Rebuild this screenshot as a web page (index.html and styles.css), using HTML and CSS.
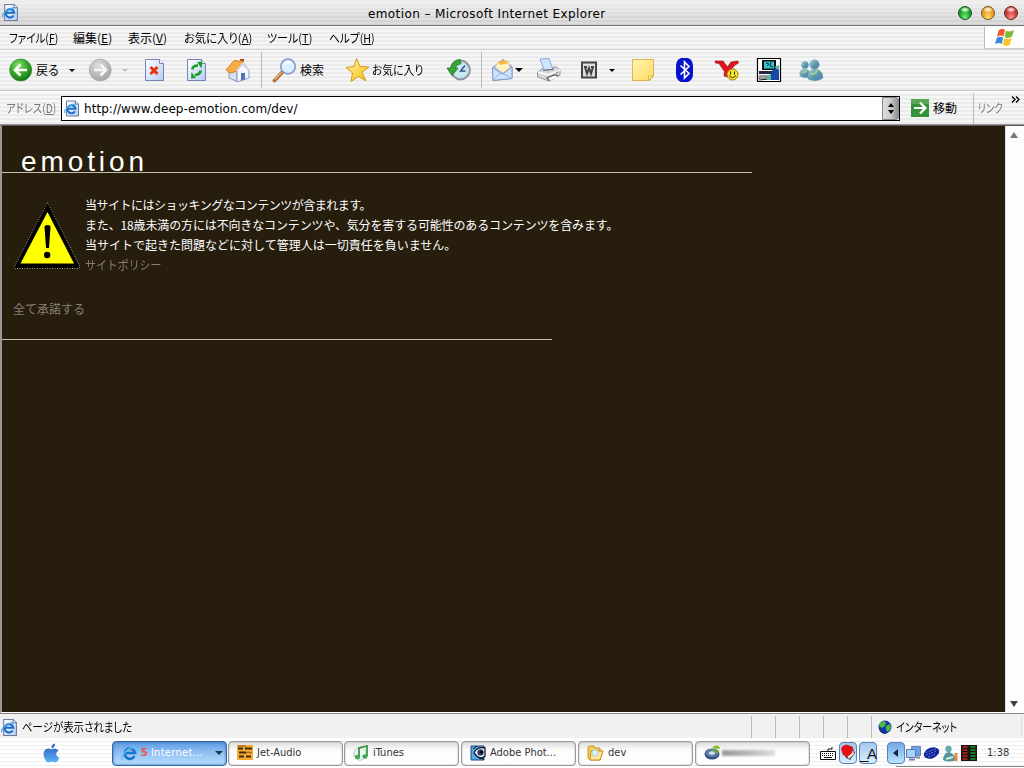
FILE: index.html
```html
<!DOCTYPE html>
<html lang="ja">
<head>
<meta charset="utf-8">
<title>emotion – Microsoft Internet Explorer</title>
<link rel="stylesheet" href="styles.css">
</head>
<body>
<svg class="defs" width="0" height="0">
<defs>
<linearGradient id="paper" x1="0" y1="0" x2="1" y2="1"><stop offset="0" stop-color="#fff"/><stop offset="1" stop-color="#b4cdf5"/></linearGradient>
<radialGradient id="green" cx=".4" cy=".3" r=".7"><stop offset="0" stop-color="#8fe07a"/><stop offset=".5" stop-color="#3cae2c"/><stop offset="1" stop-color="#157a12"/></radialGradient>
<radialGradient id="gray" cx=".4" cy=".3" r=".7"><stop offset="0" stop-color="#ddd"/><stop offset="1" stop-color="#a5a5a5"/></radialGradient>
<linearGradient id="gold" x1="0" y1="0" x2="1" y2="1"><stop offset="0" stop-color="#fff9b0"/><stop offset="1" stop-color="#f8b800"/></linearGradient>
<linearGradient id="note" x1="0" y1="0" x2="1" y2="1"><stop offset="0" stop-color="#fff6b8"/><stop offset="1" stop-color="#ffd95c"/></linearGradient>
<linearGradient id="msn" x1="0" y1="0" x2="1" y2="1"><stop offset="0" stop-color="#b4d8e8"/><stop offset=".5" stop-color="#5b9aa5"/><stop offset="1" stop-color="#4a78b8"/></linearGradient>
<linearGradient id="apple" x1="0" y1="0" x2="0" y2="1"><stop offset="0" stop-color="#2458b8"/><stop offset=".5" stop-color="#4384d8"/><stop offset="1" stop-color="#58b4f4"/></linearGradient>
<symbol id="ie-page" viewBox="0 0 16 16"><path d="M2.500.5h9l3 3v12h-12z" fill="url(#paper)" stroke="#6a7a9c"/><path d="M11.500.5v3h3" fill="#fff" stroke="#6a7a9c"/><path d="M11 10.800A4 4 0 1 1 11.500 8.200H4" fill="none" stroke="#1a6fc8" stroke-width="2"/><path d="M1 12.500C-1 9 8 2.500 12.500 4" fill="none" stroke="#4aa6e8" stroke-width="1.200"/></symbol>
<symbol id="ie" viewBox="0 0 17 16"><path d="M13.500 11A5.200 5.200 0 1 1 14 8H4.500" fill="none" stroke="#1678cc" stroke-width="2.700"/><path d="M1.500 14.500C-1.500 10 10 .5 15.500 2.500c1 .7.5 2.500 0 3.500" fill="none" stroke="#67bdf4" stroke-width="1.500"/></symbol>
</defs>
</svg>

<header class="titlebar">
  <svg class="title-icon" width="17" height="17"><use href="#ie-page"/></svg>
  <h1 class="title">emotion – Microsoft Internet Explorer</h1>
  <div class="lights"><i class="light go"></i><i class="light wait"></i><i class="light stop"></i></div>
</header>

<nav class="menubar">
  <span class="m1">ファイル(<u>F</u>)</span><span class="m2">編集(<u>E</u>)</span><span class="m3">表示(<u>V</u>)</span><span class="m4">お気に入り(<u>A</u>)</span><span class="m5">ツール(<u>T</u>)</span><span class="m6">ヘルプ(<u>H</u>)</span>
  <div class="flag"><svg width="22" height="20" viewBox="0 0 22 20"><path d="M4.500 2.500Q8-.5 11 2L9.500 8.500Q6.500 6.500 3 9z" fill="#ee5a2c"/><path d="M12 2.500Q15 4.500 20 2L18 8.500Q14 11 10.500 9z" fill="#7dbb32"/><path d="M2.700 10Q6 7.800 9.200 9.700L7.700 16Q5 14 1 16z" fill="#3c87dc"/><path d="M10.200 10.200Q14 12 17.700 9.800L16 16.500Q12 19.500 8.700 16.600z" fill="#fbc52b"/></svg></div>
</nav>

<div class="toolbar">
  <svg viewBox="0 0 26 26"><circle cx="12.700" cy="13" r="11" fill="url(#green)" stroke="#38803a" stroke-width=".7"/><path d="M12.500 7.500L7 13l5.500 5.500M7.500 13H19" fill="none" stroke="#fff" stroke-width="2.600"/></svg>
  <span class="t-back">戻る</span>
  <i class="caret"></i>
  <svg viewBox="0 0 26 26"><circle cx="12.200" cy="13" r="11" fill="url(#gray)" stroke="#aaa" stroke-width=".7"/><path d="M12.500 7.500L18 13l-5.500 5.500M17.500 13H6" fill="none" stroke="#f6f6f6" stroke-width="2.600"/></svg>
  <i class="caret off"></i>
  <svg viewBox="0 0 26 26"><path d="M3.500 2.500h14l4 4v17h-18z" fill="url(#paper)" stroke="#7583b8"/><path d="M17.500 2.500v4h4" fill="#fff" stroke="#7583b8"/><path d="M8.500 10l7 7M15.500 10l-7 7" stroke="#e8320e" stroke-width="3"/></svg>
  <svg viewBox="0 0 26 26"><path d="M3.500 2.500h14l4 4v17h-18z" fill="url(#paper)" stroke="#7583b8"/><path d="M17.500 2.500v4h4" fill="#fff" stroke="#7583b8"/><path d="M8.300 12.500q.5-4 5.700-4M16.700 13.500q-.5 4-5.700 4.500" fill="none" stroke="#1a9c28" stroke-width="2.600"/><path d="M13 5l5.500-.5-1 7zM12 21l-5 .5.500-6.500z" fill="#1a9c28"/></svg>
  <svg viewBox="0 0 26 26"><path d="M5 12v9l8 3.500V12z" fill="#d5e0f4" stroke="#8a9cc4"/><path d="M13 13l6-6 6 7v7l-12 4z" fill="#f4f7ff" stroke="#8a9cc4"/><path d="M17 16h4v6.500l-4 1.300z" fill="#5674b8"/><path d="M16 3.500V2h4v5z" fill="#b24424"/><path d="M2 13L10 3.500 20 4.500 12 14.500 6 16z" fill="#f8ac48" stroke="#d88224"/><path d="M12.500 14L19.500 6l6 8" fill="none" stroke="#d5d9e6" stroke-width="1.800"/></svg>
  <i class="sep"></i>
  <svg viewBox="0 0 26 26"><path d="M10.500 15l-8 8.500" stroke="#b56f36" stroke-width="3.800" stroke-linecap="round"/><path d="M9.500 15.500l-7 7" stroke="#f0b878" stroke-width="1.500"/><circle cx="16" cy="9.500" r="7.300" fill="#d8f0ff" stroke="#8e9cc8" stroke-width="1.700"/><path d="M11.500 9q1-4.500 5-4.500 3 0 3 2-4-1-8 2.500" fill="#fff"/></svg>
  <span class="t-search">検索</span>
  <svg viewBox="0 0 26 26"><path d="M12.500 1.500l3.500 8 9 .5-7 5.500 4 8.500-7.500-4.500L7 24.500 8.500 16 2 10.500l8-1z" fill="url(#gold)" stroke="#d89820" stroke-linejoin="round"/></svg>
  <span class="t-fav">お気に入り</span>
  <svg viewBox="0 0 26 26"><circle cx="14.500" cy="13" r="9" fill="#c8e8f4" stroke="#8d93a3" stroke-width="2.800"/><circle cx="14.500" cy="13" r="8" fill="none" stroke="#dce6ee"/><path d="M19 8.500l-4.500 5.500h5" fill="none" stroke="#345487" stroke-width="1.400"/><path d="M14 2.500Q6 3 4.500 11H1l5 7.500 6-7.500H9q1-3 6-4.500z" fill="#35a533" stroke="#17741c" stroke-width=".8"/></svg>
  <i class="sep"></i>
  <svg viewBox="0 0 26 26"><path d="M2.500 10.500L13 2.500l9 7v12l-19 2z" fill="#aaccf8" stroke="#8796cc"/><path d="M5 10l3.500-5 10-1 1.500 7-7 5z" fill="#fff3c4" stroke="#d8b888" stroke-width=".7"/><path d="M8 5l6-2 5 3-9 2z" fill="#f6b93e"/><path d="M2.500 10.500L12.500 17 22 10v11.500l-19 2z" fill="#cde4ff" stroke="#8796cc"/><path d="M3 23l8-7.500 11 6" fill="none" stroke="#8faede"/></svg>
  <i class="caret big"></i>
  <svg viewBox="0 0 26 26"><path d="M1.500 15l6-4 13-1 3.500 3v5l-11 6-11.500-4z" fill="#d6d6dc" stroke="#96969f"/><path d="M4 2l9-.5 4 11-8.500 1z" fill="#cfe6ff" stroke="#87a8db"/><path d="M2 15l10 3L24 13" fill="none" stroke="#fff" stroke-width="1.500"/><path d="M7 13.500l11-1.500" stroke="#666"/><path d="M10 20.500l9-3.500 4 2-10 5z" fill="#5b5b63"/><path d="M12 21l7-2.500 3 1.500-8 3.500z" fill="#fff"/><circle cx="21" cy="15.500" r="1" fill="#54b554"/></svg>
  <svg viewBox="0 0 26 26"><path d="M6 5.500h14v15H6z" fill="#ddd" stroke="#444" stroke-width="2"/><path d="M8 10h3M15 10h3M9 10l2 6.500 2-5.500 2 5.500 2-6.500" fill="none" stroke="#444" stroke-width="2"/></svg>
  <i class="caret"></i>
  <svg viewBox="0 0 26 26"><path d="M2.500 2.500h21v17l-4 4h-17z" fill="url(#note)" stroke="#deb64d"/><path d="M18.500 23.500v-4.500h5z" fill="#fff0a8" stroke="#dcb048"/></svg>
  <svg viewBox="0 0 26 26"><path d="M9 1h7q5 2 5 8v8q0 6-5 8H9q-5-2-5-8V9q0-6 5-8z" fill="#0712cf"/><path d="M8.500 8.500l8.500 8-4.500 4.500V5l4.500 4.500-8.500 8" fill="none" stroke="#fff" stroke-width="1.600"/></svg>
  <svg viewBox="0 0 26 26"><path d="M1 4h8l4.500 6L17 5l7-1 .5 2-3.500 2-6 7-1 5-4-1 .5-4.500L5 6.500 1.500 6z" fill="#e7141f" stroke="#780a0f" stroke-width=".6"/><circle cx="18.500" cy="17.500" r="5.500" fill="#ffe722" stroke="#977413"/><path d="M16.500 14.500v3M20.500 14.500v3M15 18.500q3.500 4 7 0" fill="none" stroke="#222"/></svg>
  <svg viewBox="0 0 26 26"><path d="M1.500 1.500h23v23h-23z" fill="#fff" stroke="#000" stroke-width="1.200"/><path d="M6 3h14v10H6z" fill="#111"/><path d="M8 4.500h10v7H8z" fill="#30c8cf"/><path d="M10 6l3 1-2 2M15 5l-1 4 3 1" fill="none" stroke="#124"/><path d="M3 14h14v3H3z" fill="#252540"/><path d="M3 18h14l-3 4H2z" fill="#999"/><path d="M3 23l10-1" stroke="#111"/><path d="M18 12q-5 3-3 11h8V11z" fill="#1749a0"/><path d="M11 19l4-2v6h-4zM18 10l5-2v5z" fill="#57b6a4"/></svg>
  <svg viewBox="0 0 26 26"><g fill="url(#msn)" stroke="#5e9aac" stroke-width=".5"><circle cx="7" cy="8" r="3.500"/><path d="M2 19q-1-7 5-7 5 0 5 8-6 2-10-1z"/><circle cx="16.500" cy="7.500" r="4.700"/><path d="M10 22q-1-10 7-10 8 1 8 9-7 5-15 1z"/></g><path d="M5 15q4 1 3-3M13 17q6 0 6-4" stroke="#9ccb90" stroke-width="2" fill="none"/></svg>
</div>

<div class="addressbar">
  <span class="t-address">アドレス(<u>D</u>)</span>
  <div class="field"><svg width="16" height="17"><use href="#ie-page"/></svg><span class="url">http://www.deep-emotion.com/dev/</span><div class="spin"><i class="up"></i><i class="down"></i></div></div>
  <svg class="go-icon" width="18" height="18" viewBox="0 0 18 18"><path d="M0 0h18v18H0z" fill="#35923a"/><path d="M0 0h18v5H0z" fill="#57a851"/><path d="M9 3.500L14.500 9 9 14.500M14 9H3" fill="none" stroke="#fff" stroke-width="2.200"/></svg>
  <span class="t-go">移動</span>
  <i class="addr-sep"></i>
  <span class="t-links">リンク</span>
  <svg class="more" width="9" height="7" viewBox="0 0 9 7"><path d="M1 .5l3 3-3 3M5 .5l3 3-3 3" fill="none" stroke="#000" stroke-width="1.400"/></svg>
</div>

<div class="viewport">
  <main class="page">
    <h2 class="logo">emotion</h2>
    <section class="warning">
      <svg class="sign" width="67" height="67" viewBox="0 0 67 67"><path d="M33.500 2.500L64 65H2z" fill="#000" stroke="#000" stroke-width="3" stroke-linejoin="round"/><path d="M33.500.5L66 64.500 65 66.500H1L.5 64.500z" fill="none" stroke="#e8e8cc" stroke-width=".7" stroke-dasharray="1 1.500"/><path d="M33.500 10L60 61.500H6.500z" fill="#ff0"/><path d="M30.500 25q0-2 3-2t3 2L35 46h-3z" fill="#000"/><circle cx="33.200" cy="53" r="3.200" fill="#000"/></svg>
      <div class="message">
        <p class="l1">当サイトにはショッキングなコンテンツが含まれます。</p>
        <p class="l2">また、18歳未満の方には不向きなコンテンツや、気分を害する可能性のあるコンテンツを含みます。</p>
        <p class="l3">当サイトで起きた問題などに対して管理人は一切責任を負いません。</p>
        <a class="l4">サイトポリシー</a>
      </div>
    </section>
    <a class="accept">全て承諾する</a>
    <div class="rule"></div>
  </main>
  <div class="scroll"><i class="up"></i><i class="down"></i></div>
</div>

<footer class="status">
  <svg width="17" height="17"><use href="#ie-page"/></svg>
  <span class="t-status">ページが表示されました</span>
  <i class="cell"></i><i class="cell"></i><i class="cell"></i><i class="cell"></i><i class="cell"></i>
  <div class="zone"><svg width="14" height="14" viewBox="0 0 14 14"><circle cx="7" cy="7" r="6.500" fill="#1238a8"/><path d="M2 3l4-2 2 2-1 3-3 2-3-2zM8 6l4-2 1 4-3 4-2-2z" fill="#4bbb42"/><path d="M1 9q3 4 8 4l-2 1Q2 13 1 9z" fill="#091c52"/></svg><span class="t-zone">インターネット</span></div>
</footer>

<div class="taskbar">
  <svg class="apple" width="17" height="20" viewBox="0 0 17 20"><path d="M8.500 5.500Q8 1.500 12 .5 12 4.500 8.500 5.500zM8.500 6.500q3-1.700 5-.5 1.300.5 2 1.700-5 3.300.7 7.300-2 4.500-4.500 4.500l-3-1-3 1Q3 19.500 1 14q-1.500-6 2.500-8Q5.500 5 8.500 6.500z" fill="url(#apple)"/></svg>
  <div class="task active"><svg width="17" height="16"><use href="#ie"/></svg><b class="count">5</b><span class="t-ie">Internet...</span><i class="caret task-caret"></i></div>
  <div class="task"><svg width="16" height="16" viewBox="0 0 16 16"><path d="M0 0h16v15H0z" fill="#f2ad32"/><path d="M1 3.500h5M8 3.500h7M2 7.500h7M2 11.500h5M9 11.500h5" stroke="#40290c" stroke-width="2"/><path d="M9 7.500h6M1 1h8" stroke="#b26e17" stroke-width="1.500"/></svg><span class="t-jet">Jet-Audio</span></div>
  <div class="task"><svg class="note" width="16" height="16" viewBox="0 0 16 16"><circle cx="7" cy="9" r="6.200" fill="#edf8f3" stroke="#afc6c4"/><path d="M6 12V3l8-2v10" fill="none" stroke="#339a43" stroke-width="1.800"/><ellipse cx="4.500" cy="12" rx="2.600" ry="2.200" fill="#43aa52"/><ellipse cx="12" cy="11.500" rx="2.600" ry="2.200" fill="#43aa52"/></svg><span class="t-itunes">iTunes</span></div>
  <div class="task"><svg width="16" height="16" viewBox="0 0 16 16"><path d="M1 1h13v14H1z" fill="#57a9e5" stroke="#1c4682"/><path d="M4 8q3-7 11-5v8q-5 5-11-3" fill="#fff" stroke="#112" stroke-width="1.300"/><circle cx="10.500" cy="7.500" r="3.200" fill="#293e7b"/><circle cx="11.500" cy="7" r="1.600" fill="#000"/><path d="M3 4l4-3M9 13l5 1" stroke="#111"/></svg><span class="t-adobe">Adobe Phot...</span></div>
  <div class="task"><svg width="17" height="16" viewBox="0 0 17 16"><path d="M1 3q0-2 2-2h4l1 2h5v3h3l-3 9H3l-2-2z" fill="#f4cf52" stroke="#c29022"/><path d="M4 6h12l-3 9H3z" fill="#ffe797" stroke="#c29022"/><circle cx="8" cy="8" r="3.200" fill="#d7f3fb" stroke="#a9c8d1"/></svg><span class="t-dev">dev</span></div>
  <div class="task"><svg width="17" height="16" viewBox="0 0 17 16"><ellipse cx="8" cy="9" rx="7.500" ry="5.500" fill="#35527f"/><ellipse cx="8" cy="8" rx="6.500" ry="4" fill="#607fae"/><ellipse cx="8" cy="8" rx="3" ry="1.800" fill="#d6e0ec"/><path d="M15 5.500A3 3 0 1 1 15 3h-4" fill="none" stroke="#82b91c" stroke-width="1.500"/></svg><i class="smudge"></i></div>
  <div class="tray">
    <svg width="16" height="15" viewBox="0 0 16 15"><path d="M.5 5.500h15v8H.5zM8 5V3h4V1" fill="#fff" stroke="#111"/><path d="M2 7.500h12M2 9.500h12" stroke="#111" stroke-dasharray="1 1"/><path d="M4 11.500h8" stroke="#111"/></svg>
    <div class="aqua"><svg width="16" height="18" viewBox="0 0 16 18"><path d="M13 5l2 5-5 7-5-3z" fill="#39383b"/><path d="M7 13q5-2 6-7l1 5-5 5z" fill="#e9e2cf"/><path d="M1 6q2-5 7-4l5 2-1 6-5 4-4-2z" fill="#e50c16"/></svg></div>
    <div class="aqua ime">_A</div>
    <div class="aqua arrow"><i></i></div>
    <svg width="17" height="17" viewBox="0 0 17 17"><path d="M6.500 1.500h9v9h-9z" fill="#68a4ea" stroke="#7082ae"/><path d="M1.500 4.500h9v8h-9z" fill="#a5d3ff" stroke="#6174a8"/><path d="M4 14.500h6M11 12.500h4" stroke="#777fae" stroke-width="2"/></svg>
    <svg width="17" height="16" viewBox="0 0 17 16"><ellipse cx="8.500" cy="8" rx="8" ry="5.300" transform="rotate(-22 8.500 8)" fill="#14269b"/><path d="M3 7.500l10-3.500M3 10l11-4M5 12l8-3" stroke="#6486e8" stroke-dasharray="1.500 1.500"/></svg>
    <svg width="17" height="17" viewBox="0 0 17 17"><circle cx="6.500" cy="4" r="3.200" fill="#67a9b0"/><path d="M1 15Q2 7 7 7q5 1 7 8-7 3-13 0z" fill="#4d94a5"/><path d="M4 14l7-2" stroke="#d9edcd" stroke-width="2"/><path d="M14 8v8" stroke="#ef873f" stroke-width="3"/></svg>
    <svg width="16" height="16" viewBox="0 0 16 16"><path d="M0 0h16v16H0z" fill="#151511"/><path d="M4 1v14" stroke="#a11b1a" stroke-width="5" stroke-dasharray="2 1"/><path d="M12 1v14" stroke="#147c24" stroke-width="5" stroke-dasharray="2 1"/></svg>
    <span class="clock">1:38</span>
  </div>
</div>
</body>
</html>
```
FILE: styles.css
```css
* { box-sizing: border-box; }
body {
  margin: 0; width: 1024px; height: 768px; overflow: hidden;
  display: flex; flex-direction: column;
  font: 12px/16px "Noto Sans CJK JP", sans-serif; color: #000;
  font-feature-settings: "palt"; white-space: nowrap;
}
.defs { position: absolute; }
svg, i, span { flex: none; }
i { display: block; }
h1, h2, p { margin: 0; font-weight: 400; }
u { text-underline-offset: 1px; }

.titlebar {
  height: 26px; border-bottom: 1px solid #777; display: grid;
  grid-template-columns: 368px 1fr 66px; align-items: center;
  background: repeating-linear-gradient(transparent 0 2px, #ffffff38 2px 4px), linear-gradient(#eee, #cfcfcf);
}
.title-icon { margin: -2px 0 0 2px; }
.title { font: 12px/24px "DejaVu Sans", sans-serif; padding-top: 2px; letter-spacing: .4px; }
.lights { display: flex; gap: 9px; }
.light { width: 14px; height: 14px; border-radius: 50%; border: 1px solid #333; }
.go { background: radial-gradient(ellipse 5px 3px at 50% 22%, #d4ffd0 20%, transparent), radial-gradient(at 50% 100%, #83f783, #169b26 65%); border-color: #174d1a; }
.wait { background: radial-gradient(ellipse 5px 3px at 50% 22%, #fff4d4 20%, transparent), radial-gradient(at 50% 100%, #ffe971, #e99a24 65%); border-color: #75501c; }
.stop { background: radial-gradient(ellipse 5px 3px at 50% 22%, #ffdad4 20%, transparent), radial-gradient(at 50% 100%, #ff9b91, #c43838 65%); border-color: #621f20; }

.menubar, .toolbar, .addressbar { background: repeating-linear-gradient(#f6f6f6 0 2px, #ebebeb 2px 4px); }
.menubar {
  height: 23px; display: grid; align-items: center; padding-left: 9px;
  grid-template-columns: 64px 55px 56px 83px 62px 1fr 40px;
}
.flag { height: 22px; background: #fff; border-left: 1px solid #bbb; border-bottom: 1px solid #ccc; padding: 1px 0 0 9px; }

/* condensed kana labels */
.m1, .m4, .m5, .m6, .t-fav, .t-address, .t-links, .t-status, .t-zone, .l4 { transform-origin: 0 50%; }
.m1 { transform: scaleX(.875); }
.m4 { transform: scaleX(.944); }
.m5 { transform: scaleX(.92); }
.m6 { transform: scaleX(.89); }
.t-fav { transform: scaleX(.9); }
.t-address { transform: scaleX(.86); }
.t-links { transform: scaleX(.8); }
.t-status { transform: scaleX(.87); }
.t-zone { transform: scaleX(.83); }

.toolbar {
  height: 42px; border-top: 1px solid #d4d4c8; border-bottom: 1px solid #c9c7bb; display: grid; align-items: center; padding-left: 8px;
  grid-template-columns: 28px 32px 20px 30px 24px 42px 40px 36px 12px 28px 44px 28px 74px 34px 10px 25px 21px 40px 32px 22px 42px 42px 42px 42px 26px;
}
.toolbar svg { width: 26px; height: 26px; }
.sep { height: 36px; border-left: 1px solid #bbb; margin-left: 1px; }
.caret { width: 0; border: 3px solid transparent; border-top-color: #000; border-bottom: 0; }
.toolbar .caret { margin-left: 1px; }
.toolbar .caret.off { border-top-color: #bbb; margin-left: 4px; }
.toolbar .caret.big { border-width: 4px 4px 0; margin-left: 0; }

.addressbar {
  height: 34px; border-top: 1px solid #fff; border-bottom: 1px solid #999; display: grid; align-items: center;
  grid-template-columns: 55px 850px 22px 40px 5px 33px 9px; padding-left: 6px;
}
.t-address, .t-links { color: #777; }
.field { width: 839px; height: 25px; background: #fff; border: 1px solid #000; display: flex; align-items: center; padding-left: 2px; }
.url { font: 12px/22px "DejaVu Sans", sans-serif; margin-left: 4px; padding-top: 2px; letter-spacing: .04px; }
.spin { margin-left: auto; width: 17px; height: 23px; background: linear-gradient(90deg, #ddd, #ccc 50%, #909090); border: 1px solid #888; border-radius: 0 3px 3px 0; display: flex; flex-direction: column; align-items: center; justify-content: center; gap: 3px; }
.spin .up { border: 3px solid transparent; border-bottom: 4px solid #000; border-top: 0; }
.spin .down { border: 3px solid transparent; border-top: 4px solid #000; border-bottom: 0; }
.addr-sep { height: 31px; border-left: 1px solid #bbb; }
.more { align-self: start; margin-top: 4px; }

.viewport { height: 588px; display: flex; border-top: 1px solid #555; border-left: 2px solid #999; border-bottom: 1px solid #fff; }
.page { width: 1003px; background: #261d0d; color: #fff; }
.logo { width: 750px; height: 47px; border-bottom: 1px solid #c8bfae; padding: 22px 0 0 19px; font: 28px/27px "Liberation Sans", sans-serif; letter-spacing: 3.900px; }
.warning { display: flex; padding: 29px 0 0 12px; height: 121px; }
.message { margin: -7px 0 0 4px; line-height: 20px; font-feature-settings: normal; }
.message a { display: block; }
.l1 { letter-spacing: -.5px; }
.l2 { letter-spacing: -.14px; }
.l4, .accept { color: #89806f; }
.l4 { transform: scaleX(.91); }
.accept { display: block; margin: 7px 0 0 11px; height: 38px; line-height: 16px; font-feature-settings: normal; }
.rule { width: 550px; height: 1px; background: #c8bfae; }
.scroll { width: 19px; background: #fdfdfd; border-left: 1px solid #ddd; display: flex; flex-direction: column; justify-content: space-between; align-items: center; padding: 6px 2px 5px 0; }
.scroll .up { border: 4px solid transparent; border-bottom: 6px solid #777; border-top: 0; }
.scroll .down { border: 4px solid transparent; border-top: 6px solid #444; border-bottom: 0; }

.status { height: 25px; background: #f1f1f1; border-top: 1px solid #888; display: flex; align-items: center; padding: 2px 0 0 1px; }
.status .t-status { width: 729px; margin-left: 4px; }
.cell { width: 24px; height: 22px; border-left: 1px solid #bbb; }
.zone { width: 151px; height: 22px; border-left: 1px solid #bbb; border-right: 1px solid #ddd; display: flex; align-items: center; padding-left: 6px; gap: 4px; }

.taskbar {
  height: 29px; display: grid; align-items: center; padding: 1px 0 0 43px;
  grid-template-columns: 69px 116px 116px 117px 117px 117px 125px 1fr;
  background: linear-gradient(90deg, transparent 896px, #888 896px) 0 100% / 100% 1px no-repeat, repeating-linear-gradient(#fff 0 3px, #eee 3px 4px);
  font: 11px/16px "DejaVu Sans Condensed", sans-serif; color: #333;
}
.task { width: 115px; height: 25px; border: 1px solid #9a9a9a; border-radius: 4px; background: linear-gradient(#ddd, #fcfcfc 35%, #fff); display: flex; align-items: center; padding-left: 8px; gap: 4px; box-shadow: inset 0 0 2px #aaa; }
.active { background: linear-gradient(#5c9be3, #8fbff2 45%, #b7e0ff); border-color: #3865a8; color: #fff; box-shadow: inset 0 0 3px #3568ad; gap: 3px; }
.count { color: #f05048; font-size: 11px; }
.t-ie { letter-spacing: .3px; }
.task-caret { border-width: 4px 4px 0; border-top-color: #234; margin-left: 9px; }
.smudge { width: 53px; height: 6px; background: linear-gradient(90deg, #999, #bbb 55%, #ddd); filter: blur(1px); margin-left: -3px; }
.tray { display: grid; align-items: center; grid-template-columns: 19px 20px 28px 18px 18px 19px 19px 26px 1fr; }
.aqua { width: 18px; height: 22px; border: 1px solid #5882b4; border-radius: 4px; background: linear-gradient(#a5c8ef, #d8efff); }
.ime { color: #111; font: 15px/21px "Liberation Sans Narrow", "Liberation Sans", sans-serif; letter-spacing: -1.300px; }
.arrow { background: linear-gradient(#75a9e5, #b9e2ff); }
.arrow i { width: 0; margin: 6px 0 0 5px; border: 4px solid transparent; border-right: 5px solid #102448; border-left: 0; }
```
